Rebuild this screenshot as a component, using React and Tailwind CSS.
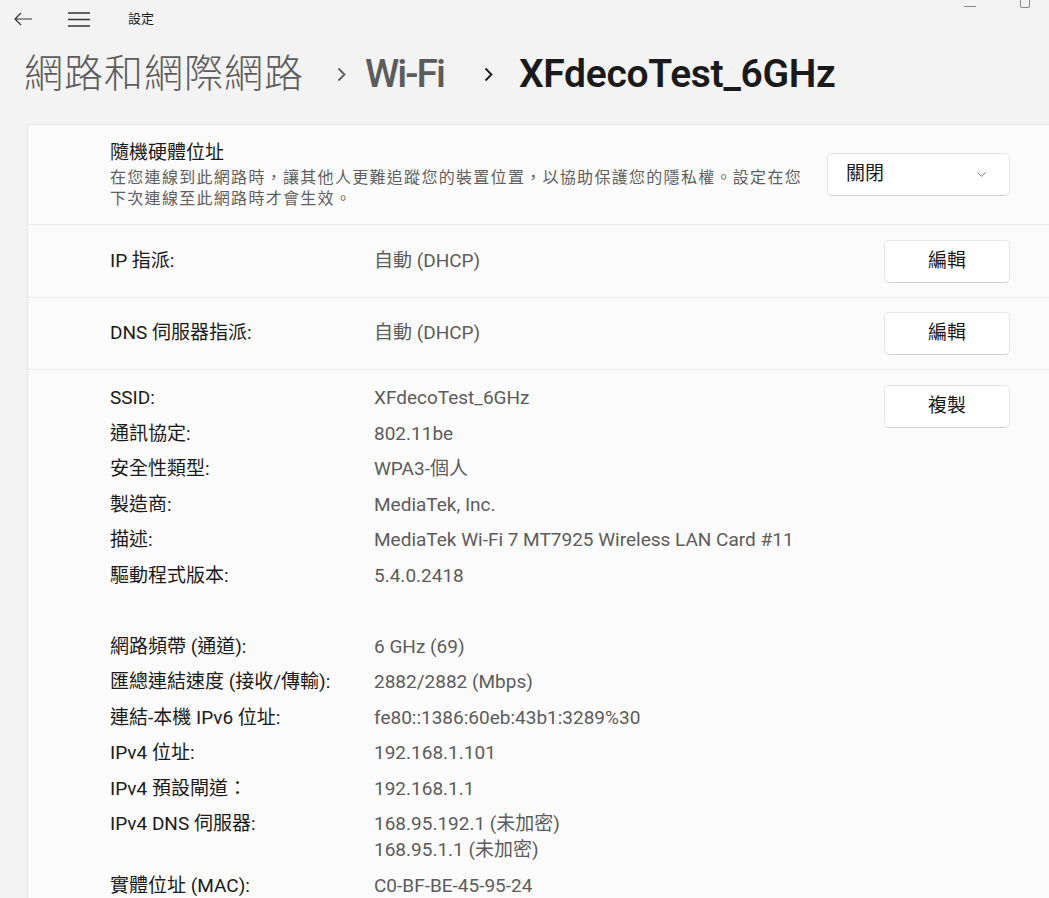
import { ChevronDown } from 'lucide-react'

const FONT = { fontFamily: "'Segoe UI', Roboto, 'Noto Sans CJK TC', sans-serif" }

const props = [
  ['SSID:', ['XFdecoTest_6GHz']],
  ['通訊協定:', ['802.11be']],
  ['安全性類型:', ['WPA3-個人']],
  ['製造商:', ['MediaTek, Inc.']],
  ['描述:', ['MediaTek Wi-Fi 7 MT7925 Wireless LAN Card #11']],
  ['驅動程式版本:', ['5.4.0.2418']],
  null,
  ['網路頻帶 (通道):', ['6 GHz (69)']],
  ['匯總連結速度 (接收/傳輸):', ['2882/2882 (Mbps)']],
  ['連結-本機 IPv6 位址:', ['fe80::1386:60eb:43b1:3289%30']],
  ['IPv4 位址:', ['192.168.1.101']],
  ['IPv4 預設閘道：', ['192.168.1.1']],
  ['IPv4 DNS 伺服器:', ['168.95.192.1 (未加密)', '168.95.1.1 (未加密)']],
  ['實體位址 (MAC):', ['C0-BF-BE-45-95-24']],
]

function Button({ children }) {
  return (
    <button className="h-[43px] w-[126px] rounded-[5px] border border-[#e5e5e5] border-b-[#d0d0d0] bg-white text-[19px] text-[#1a1a1a]">
      {children}
    </button>
  )
}

function Crumb({ color }) {
  return (
    <svg width="9" height="15" viewBox="0 0 9 15" fill="none" stroke={color} strokeWidth="1.8">
      <path d="M1.5 1.5l6 6-6 6" />
    </svg>
  )
}

export default function App() {
  return (
    <div className="h-[898px] w-[1049px] overflow-hidden bg-[#f3f3f3] text-[#1a1a1a]" style={FONT}>
      {/* Title bar */}
      <div className="relative flex h-[38px] items-center">
        <svg className="ml-[14px]" width="19" height="14" viewBox="0 0 19 14" fill="none" stroke="#333" strokeWidth="1.2">
          <path d="M18 7H1M7 1L1 7l6 6" />
        </svg>
        <svg className="ml-[35px]" width="22" height="15" viewBox="0 0 22 15" fill="none" stroke="#333" strokeWidth="1.3">
          <path d="M0 1h22M0 7.5h22M0 14h22" />
        </svg>
        <span className="ml-[38px] text-[13px]">設定</span>
        <div className="absolute left-[964px] top-[6px] h-px w-[12px] bg-[#888]" />
        <div className="absolute left-[1020px] top-[-4px] h-[12px] w-[10px] rounded-[2px] border border-[#888]" />
      </div>

      {/* Breadcrumb header */}
      <div className="flex h-[72px] items-center pl-[24px]">
        <span className="text-[39px] font-light tracking-[1px] text-[#5c5c5c]">網路和網際網路</span>
        <span className="ml-[33px]"><Crumb color="#5c5c5c" /></span>
        <span className="ml-[19px] text-[39px] font-medium tracking-[-2px] text-[#5c5c5c]">Wi-Fi</span>
        <span className="ml-[40px]"><Crumb color="#1a1a1a" /></span>
        <span className="ml-[26px] text-[39px] font-semibold tracking-[-0.3px] text-[#1a1a1a]">XFdecoTest_6GHz</span>
      </div>

      {/* Card */}
      <div className="ml-[27px] mt-[14px] w-[1040px] border border-[#e5e5e5] bg-[#fbfbfb]">
        <div className="flex h-[99px] items-center pl-[82px] pr-[56px]">
          <div className="flex-1">
            <div className="text-[19px] leading-[24px]">隨機硬體位址</div>
            <div className="mt-[2px] w-[704px] text-[16px] leading-[21px] tracking-[1.3px] text-[#5f5f5f]">
              在您連線到此網路時，讓其他人更難追蹤您的裝置位置，以協助保護您的隱私權。設定在您下次連線至此網路時才會生效。
            </div>
          </div>
          <div className="flex h-[43px] w-[183px] items-center justify-between rounded-[5px] border border-[#e5e5e5] border-b-[#d0d0d0] bg-white pl-[18px] pr-[20px] text-[19px]">
            <span>關閉</span>
            <ChevronDown size={15} strokeWidth={1.3} color="#555" />
          </div>
        </div>

        <div className="flex h-[73px] items-center border-t border-[#ebebeb] pl-[82px] pr-[56px] text-[19px]">
          <span className="w-[264px]">IP 指派:</span>
          <span className="flex-1 text-[#5c5c5c]">自動 (DHCP)</span>
          <Button>編輯</Button>
        </div>

        <div className="flex h-[72px] items-center border-t border-[#ebebeb] pl-[82px] pr-[56px] text-[19px]">
          <span className="w-[264px]">DNS 伺服器指派:</span>
          <span className="flex-1 text-[#5c5c5c]">自動 (DHCP)</span>
          <Button>編輯</Button>
        </div>

        <div className="flex border-t border-[#ebebeb] pl-[82px] pr-[56px] pt-[15px] pb-[20px] text-[19px]">
          <div className="flex flex-1 flex-col gap-[9.5px]">
            {props.map((p, i) =>
              p ? (
                <div key={i} className="flex leading-[26px]">
                  <span className="w-[264px] shrink-0">{p[0]}</span>
                  <div className="text-[#5c5c5c]">
                    {p[1].map((v) => (
                      <div key={v}>{v}</div>
                    ))}
                  </div>
                </div>
              ) : (
                <div key={i} className="h-[26px]" />
              )
            )}
          </div>
          <div>
            <Button>複製</Button>
          </div>
        </div>
      </div>
    </div>
  )
}
